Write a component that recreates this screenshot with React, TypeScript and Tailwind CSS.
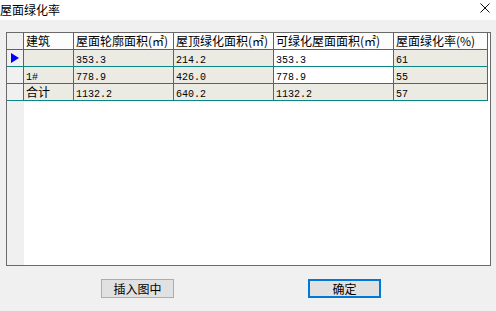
import React from 'react';

const cjk = "font-['Noto_Sans_CJK_SC','Noto_Sans',sans-serif]";
const mono = "font-['Liberation_Mono','Noto_Sans_CJK_SC',monospace] text-[10px]";

const headers = ['建筑', '屋面轮廓面积(㎡)', '屋顶绿化面积(㎡)', '可绿化屋面面积(㎡)', '屋面绿化率(%)'];

const rows = [
  { name: '', vals: ['353.3', '214.2', '353.3', '61'], current: true, editable: true },
  { name: '1#', vals: ['778.9', '426.0', '778.9', '55'], current: false, editable: true },
  { name: '合计', vals: ['1132.2', '640.2', '1132.2', '57'], current: false, editable: false },
];

const cell = 'h-[17px] border-r border-b border-[#0b8686] pl-[2px] leading-[16px] whitespace-nowrap overflow-hidden';

const App = () => {
  return (
    <div className={`w-[496px] h-[311px] bg-[#f0f0f0] text-black text-[12px] ${cjk} overflow-hidden`}>
      <div className="h-[20px] bg-white flex items-center justify-between">
        <span className="text-[12px] leading-[16px]">屋面绿化率</span>
        <svg width="10" height="10" viewBox="0 0 10 10" className="mr-[6px] mb-[4px]">
          <path d="M0.5 0.5 L9.5 9.5 M9.5 0.5 L0.5 9.5" stroke="#111" strokeWidth="1" />
        </svg>
      </div>

      <div className="ml-[6px] mt-[12px] w-[485px] h-[234px] border border-[#6a6a6a] bg-white flex flex-col">
        <div className="grid grid-cols-[17px_50px_100px_100px_120px_94px]">
          <div className={`${cell} bg-[#f0f0f0]`} />
          {headers.map((h) => (
            <div key={h} className={`${cell} bg-[#fcfcfc]`}>
              {h}
            </div>
          ))}
          {rows.map((r, i) => (
            <React.Fragment key={i}>
              <div className={`${cell} bg-[#f0f0f0] flex items-center`}>
                {r.current && (
                  <svg width="8" height="10" viewBox="0 0 8 10" className="ml-[2px]">
                    <polygon points="0,0 8,5 0,10" fill="#0000ff" />
                  </svg>
                )}
              </div>
              <div className={`${cell} bg-[#ecebe3]`}>
                {r.name === '1#' ? <span className={mono}>{r.name}</span> : r.name}
              </div>
              {r.vals.map((v, j) => (
                <div
                  key={j}
                  className={`${cell} ${j === 2 && r.editable ? 'bg-white' : 'bg-[#ecebe3]'}`}
                >
                  <span className={mono}>{v}</span>
                </div>
              ))}
            </React.Fragment>
          ))}
        </div>
        <div className="flex-1 flex">
          <div className="w-[17px] bg-[#f0f0f0]" />
          <div className="flex-1 bg-white" />
        </div>
      </div>

      <div className="flex mt-[13px]">
        <button className="ml-[101px] w-[73px] h-[19px] border border-[#adadad] bg-[#e1e1e1] text-[12px] leading-[16px] flex items-center justify-center">
          插入图中
        </button>
        <button className="ml-[134px] w-[73px] h-[19px] border-2 border-[#0078d7] bg-[#e1e1e1] text-[12px] leading-[16px] flex items-center justify-center">
          确定
        </button>
      </div>
    </div>
  );
};

export default App;
